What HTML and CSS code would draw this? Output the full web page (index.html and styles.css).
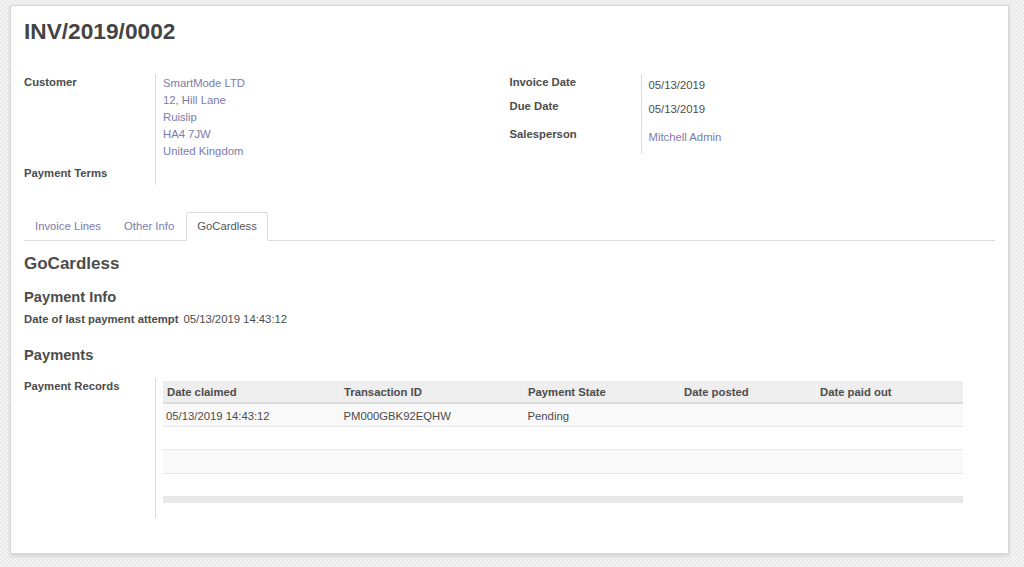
FILE: index.html
```html
<!DOCTYPE html>
<html lang="en">
<head>
  <meta charset="UTF-8">
  <title>INV/2019/0002</title>
  <link rel="stylesheet" href="styles.css">
</head>
<body>

<div class="sheet">
  <h1 class="title">INV/2019/0002</h1>

  <!-- header fields -->
  <div class="groups">
    <div class="group">
      <div class="row row-customer">
        <div class="label">Customer</div>
        <div class="value value-address">
          <a href="#">SmartMode LTD</a>
          <a href="#">12, Hill Lane</a>
          <a href="#">Ruislip</a>
          <a href="#">HA4 7JW</a>
          <a href="#">United Kingdom</a>
        </div>
      </div>
      <div class="row row-terms">
        <div class="label">Payment Terms</div>
        <div class="value"></div>
      </div>
    </div>

    <div class="group">
      <div class="row row-small">
        <div class="label">Invoice Date</div>
        <div class="value value-field">05/13/2019</div>
      </div>
      <div class="row">
        <div class="label">Due Date</div>
        <div class="value value-field">05/13/2019</div>
      </div>
      <div class="row">
        <div class="label">Salesperson</div>
        <div class="value value-field"><a href="#">Mitchell Admin</a></div>
      </div>
    </div>
  </div>

  <!-- tabs -->
  <ul class="tabs">
    <li><a href="#">Invoice Lines</a></li>
    <li><a href="#">Other Info</a></li>
    <li class="active"><a href="#">GoCardless</a></li>
  </ul>

  <div class="tab-page">
    <h2>GoCardless</h2>
    <h3 class="first">Payment Info</h3>
    <div class="inline-field">
      <span class="label-inline">Date of last payment attempt</span>
      <span>05/13/2019 14:43:12</span>
    </div>

    <h3>Payments</h3>
    <div class="row row-records">
      <div class="label">Payment Records</div>
      <div class="value value-table">
        <table class="records">
          <thead>
            <tr>
              <th class="c1">Date claimed</th>
              <th class="c2">Transaction ID</th>
              <th class="c3">Payment State</th>
              <th class="c4">Date posted</th>
              <th class="c5">Date paid out</th>
            </tr>
          </thead>
          <tbody>
            <tr>
              <td>05/13/2019 14:43:12</td>
              <td>PM000GBK92EQHW</td>
              <td>Pending</td>
              <td></td>
              <td></td>
            </tr>
            <tr class="empty"><td colspan="5"></td></tr>
            <tr class="empty"><td colspan="5"></td></tr>
            <tr class="empty"><td colspan="5"></td></tr>
          </tbody>
          <tfoot>
            <tr><td colspan="5"></td></tr>
          </tfoot>
        </table>
      </div>
    </div>
  </div>
</div>

</body>
</html>
```

FILE: styles.css
```css
:root {
  --text: #4c4c4c;
  --link: #7c7bad;
  --line: #dddddd;
}

body {
  margin: 0;
  font-family: "Liberation Sans", Arial, sans-serif;
  font-size: 11.3px;
  line-height: 17px;
  color: var(--text);
  background-color: #eeeeee;
  background-image: repeating-conic-gradient(#ebebeb 0 25%, #f3f3f3 0 50%);
  background-size: 4px 4px;
  height: 567px;
  overflow: hidden;
}

a {
  color: var(--link);
  text-decoration: none;
}

.sheet {
  margin: 5px 15px 0 10px;
  padding: 11px 13px 35px 13px;
  background: #fff;
  border: 1px solid #d6d6d6;
  box-shadow: 0 2px 4px rgba(0, 0, 0, 0.12);
}

.title {
  margin: 0;
  font-size: 22.7px;
  line-height: 28px;
  font-weight: bold;
  color: #444;
}

/* groups */
.groups {
  display: flex;
  margin-top: 29px;
}

.group {
  flex: 1;
}

.row {
  display: flex;
  height: 28px;
}

.row-small {
  height: 24px;
}

.row-customer {
  height: 91px;
}

.row-terms {
  height: 20px;
}

.label {
  width: 131px;
  flex: none;
  font-weight: bold;
  border-right: 1px solid var(--line);
}

.value {
  padding-left: 7px;
}

.value-address {
  display: flex;
  flex-direction: column;
  padding-top: 1px;
}

.value-field {
  padding-top: 3px;
}

/* tabs */
.tabs {
  display: flex;
  list-style: none;
  margin: 27px 0 0 0;
  padding: 0;
  border-bottom: 1px solid var(--line);
}

.tabs li {
  margin-right: 1px;
  margin-bottom: -1px;
  border: 1px solid transparent;
  border-radius: 2px 2px 0 0;
}

.tabs li a {
  display: block;
  padding: 5px 10px;
}

.tabs li.active {
  border-color: var(--line);
  border-bottom-color: #fff;
  background: #fff;
}

.tabs li.active a {
  color: #555;
}

/* tab page */
.tab-page h2 {
  margin: 13px 0 0 0;
  font-size: 17px;
  line-height: 20px;
  font-weight: bold;
}

.tab-page h3 {
  margin: 18px 0 0 0;
  font-size: 14.7px;
  line-height: 18px;
  font-weight: bold;
}

.tab-page h3.first {
  margin-top: 14px;
}

.inline-field {
  display: flex;
  gap: 5px;
  margin-top: 5px;
}

.label-inline {
  font-weight: bold;
}

.row-records {
  height: auto;
  margin-top: 14px;
}

.value-table {
  padding-top: 3px;
  padding-bottom: 15px;
}

/* one2many list */
.records {
  width: 800px;
  border-collapse: collapse;
  table-layout: fixed;
}

.records th {
  text-align: left;
  font-weight: bold;
  background: #eeeeee;
  padding: 3px 4px 1px 3px;
  border-bottom: 2px solid #dcdcdc;
  border-left: 1px solid #f6f6f6;
}

.records th.c1 {
  width: 169px;
  border-left: none;
  padding-left: 4px;
}

.records th.c2 { width: 176px; }
.records th.c3 { width: 148px; }
.records th.c4 { width: 128px; }

.records td {
  padding: 4px 3px 1px 3px;
  height: 17px;
  border-bottom: 1px solid #e6e6e6;
}

.records tbody tr:nth-child(odd) {
  background: #f9f9f9;
}

.records tr.empty td {
  padding: 0;
  height: 22.34px;
}

.records tfoot td {
  padding: 0;
  height: 6px;
  background: #e8e8e8;
  border: none;
}
```
